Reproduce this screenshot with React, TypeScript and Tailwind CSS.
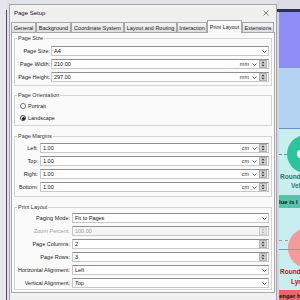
import React from "react";

function Chevron() {
  return (
    <svg width="5" height="3" viewBox="0 0 5 3" className="shrink-0">
      <path d="M0.5 0.5 L2.5 2.5 L4.5 0.5" fill="none" stroke="#555" strokeWidth="0.9" />
    </svg>
  );
}

function Spinner({ disabled }: { disabled?: boolean }) {
  const f = disabled ? "#b8b8b8" : "#333";
  return (
    <svg width="8" height="8" viewBox="0 0 8 8" className="shrink-0">
      <rect x="0.5" y="0.5" width="7" height="7" fill={disabled ? "#e6e6e6" : "#d2d2d2"} stroke={disabled ? "#d0d0d0" : "#b0b0b0"} />
      <path d="M4 1.5 L5.6 3.2 L2.4 3.2Z" fill={f} />
      <path d="M4 6.5 L5.6 4.8 L2.4 4.8Z" fill={f} />
    </svg>
  );
}

type FieldProps = { value: string; unit?: string; spin?: boolean; combo?: boolean; disabled?: boolean };

function Field({ value, unit, spin, combo, disabled }: FieldProps) {
  return (
    <div
      className={`flex-1 h-[10px] flex items-center border border-[#c8c8c8] border-t-[#8f8f8f] ${
        disabled ? "bg-[#f5f5f5] text-[#9a9a9a]" : "bg-white text-[#111]"
      }`}
    >
      <span className="flex-1 pl-[2px] leading-[8px]">{value}</span>
      {unit && <span className="leading-[8px] mr-[3px] text-[#333]">{unit}</span>}
      {unit && (
        <span className="mr-[2px] flex">
          <Chevron />
        </span>
      )}
      {combo && (
        <span className="mr-[1px] flex">
          <Chevron />
        </span>
      )}
      {spin && (
        <span className="mr-[1px] flex">
          <Spinner disabled={disabled} />
        </span>
      )}
    </div>
  );
}

function Row({ label, w, gap, disabled, ...rest }: FieldProps & { label: string; w: string; gap: string }) {
  return (
    <div className={`flex items-center h-[10px] ${gap}`}>
      <span className={`${w} text-right leading-[8px] ${disabled ? "text-[#9a9a9a]" : "text-[#1a1a1a]"}`}>{label}</span>
      <Field disabled={disabled} {...rest} />
    </div>
  );
}

function Group({ title, className, children }: { title: string; className: string; children: React.ReactNode }) {
  return (
    <fieldset className={`border border-[#d4d4d4] pl-0 pr-[2px] ${className}`}>
      <legend className="ml-[2px] px-[1px] leading-[8px] text-[#333]">{title}</legend>
      {children}
    </fieldset>
  );
}

const tabs: [string, string][] = [
  ["General", "w-[25px]"],
  ["Background", "w-[35px]"],
  ["Coordinate System", "w-[53px]"],
  ["Layout and Routing", "w-[53px]"],
  ["Interaction", "w-[30px]"],
  ["Print Layout", "w-[35px]"],
  ["Extensions", "w-[32px]"],
];

export default function App() {
  return (
    <div className="w-[300px] h-[300px] overflow-hidden flex bg-[#e3e3ea] font-['Liberation_Sans',Arial,sans-serif] text-[5.5px]">
      {/* left strip */}
      <div className="w-[9px] h-full flex shrink-0">
        <div className="w-[6px] bg-[#e6e6ee]" />
        <div className="w-[1px] mt-[10px] bg-[#5b3f70]" />
        <div className="w-[2px] bg-[#e2e2ea]" />
      </div>

      {/* dialog */}
      <div className="w-[268px] shrink-0 mt-[4px] h-[300px] border border-[#a4a4a4] bg-[#f0f0f0] flex flex-col">
        <div className="h-[15px] flex items-center justify-between pl-[4px] pr-[7px]">
          <span className="text-[6px] leading-[8px] text-[#111]">Page Setup</span>
          <svg width="6" height="6" viewBox="0 0 6 6">
            <path d="M0.5 0.5 L5.5 5.5 M5.5 0.5 L0.5 5.5" stroke="#666" strokeWidth="0.8" />
          </svg>
        </div>
        <div className="h-[12px] flex items-end px-[1px]">
          {tabs.map(([t, w]) => {
            const sel = t === "Print Layout";
            return (
              <div
                key={t}
                className={`${w} shrink-0 flex items-center justify-center border border-b-0 border-[#a8a8a8] leading-[8px] text-[#1a1a1a] whitespace-nowrap ${
                  sel ? "h-[13px] -mb-px relative z-10 bg-[#fafafa]" : "h-[10px] bg-gradient-to-b from-[#f5f5f5] to-[#dedede]"
                }`}
              >
                {t}
              </div>
            );
          })}
        </div>
        <div className="mx-[1px] border border-[#a8a8a8] bg-[#fafafa] px-[2px] pb-[2px] flex flex-col">
          <Group title="Page Size" className="mt-[1px] pb-[3px]">
            <div className="flex flex-col gap-[3px] pt-[4px]">
              <Row label="Page Size:" w="w-[35px]" gap="gap-[1px]" value="A4" combo />
              <Row label="Page Width:" w="w-[35px]" gap="gap-[1px]" value="210.00" unit="mm" spin />
              <Row label="Page Height:" w="w-[35px]" gap="gap-[1px]" value="297.00" unit="mm" spin />
            </div>
          </Group>
          <Group title="Page Orientation" className="mt-[5px] pb-[2px]">
            <div className="flex flex-col gap-[2px] pt-[2px]">
              <div className="h-[10px] flex items-center">
                <span className="ml-[5px] w-[6px] h-[6px] rounded-full border border-[#707070] bg-white" />
                <span className="ml-[2px] leading-[8px] text-[#1a1a1a]">Portrait</span>
              </div>
              <div className="h-[10px] flex items-center">
                <span className="ml-[5px] w-[6px] h-[6px] rounded-full border border-[#404040] bg-white flex items-center justify-center">
                  <span className="w-[3px] h-[3px] rounded-full bg-[#111]" />
                </span>
                <span className="ml-[2px] leading-[8px] text-[#1a1a1a]">Landscape</span>
              </div>
            </div>
          </Group>
          <Group title="Page Margins" className="mt-[6px] pb-[4px]">
            <div className="flex flex-col gap-[3px] pt-[3px]">
              <Row label="Left:" w="w-[23px]" gap="gap-[2px]" value="1.00" unit="cm" spin />
              <Row label="Top:" w="w-[23px]" gap="gap-[2px]" value="1.00" unit="cm" spin />
              <Row label="Right:" w="w-[23px]" gap="gap-[2px]" value="1.00" unit="cm" spin />
              <Row label="Bottom:" w="w-[23px]" gap="gap-[2px]" value="1.00" unit="cm" spin />
            </div>
          </Group>
          <Group title="Print Layout" className="mt-[6px] pb-[1px]">
            <div className="flex flex-col gap-[3px] pt-[2px]">
              <Row label="Paging Mode:" w="w-[55px]" gap="gap-[2px]" value="Fit to Pages" combo />
              <Row label="Zoom Percent:" w="w-[55px]" gap="gap-[2px]" value="100.00" spin disabled />
              <Row label="Page Columns:" w="w-[55px]" gap="gap-[2px]" value="2" spin />
              <Row label="Page Rows:" w="w-[55px]" gap="gap-[2px]" value="3" spin />
              <Row label="Horizontal Alignment:" w="w-[55px]" gap="gap-[2px]" value="Left" combo />
              <Row label="Vertical Alignment:" w="w-[55px]" gap="gap-[2px]" value="Top" combo />
            </div>
          </Group>
        </div>
        <div className="flex-1" />
      </div>

      {/* right background window */}
      <div className="flex-1 h-full flex flex-col">
        <div className="h-[9px] bg-[#dcdce6] shrink-0" />
        <div className="h-[3px] bg-[#2e2e5c] shrink-0" />
        <div className="flex-1 flex">
          <div className="w-[2px] bg-[#d6d6de]" />
          <div className="flex-1 flex flex-col">
            <div className="h-[56px] bg-[#8e8ef6] shrink-0" />
            <div className="h-[60px] bg-[#b4d3f3] shrink-0" />
            <div className="h-[1px] bg-[#6f8cc4] shrink-0" />
            <div className="flex-1 relative overflow-hidden bg-[#c8eef0] font-['Liberation_Sans',Arial,sans-serif] font-bold">
              <div className="absolute left-0 top-[25px] w-[8px] border-t border-dashed border-[#3aa890]" />
              <div className="absolute left-[8px] top-[6px] w-[38px] h-[38px] rounded-full bg-[#2cc49a]" />
              <div className="absolute left-[18px] top-[21px] w-[12px] h-[8px] rounded-full bg-white" />
              <div className="absolute left-[1px] top-[44px] text-[6.5px] leading-[8px] text-[#17806e] whitespace-nowrap">Rounded</div>
              <div className="absolute left-[12px] top-[53px] text-[6.5px] leading-[8px] text-[#17806e] whitespace-nowrap">Velocity</div>
              <div className="absolute left-0 right-0 top-[66px] h-[13px] bg-[#55c4aa] flex items-center">
                <span className="text-[6px] leading-[8px] text-[#102020] whitespace-nowrap">lue is l</span>
              </div>
              <div className="absolute left-0 top-[111px] w-[9px] border-t border-dashed border-[#a0a0a0]" />
              <div className="absolute left-[9px] top-[99px] w-[40px] h-[40px] rounded-full bg-[#f49a9a]" />
              <div className="absolute left-0 right-0 top-[120px] h-[1px] bg-[#7d98cc]" />
              <div className="absolute left-[1px] top-[139px] text-[6.5px] leading-[8px] text-[#c0141e] whitespace-nowrap">Rounded</div>
              <div className="absolute left-[12px] top-[149px] text-[6.5px] leading-[8px] text-[#c0141e] whitespace-nowrap">Lynx</div>
              <div className="absolute left-0 right-0 top-[161px] h-[12px] bg-[#e86666] flex items-center">
                <span className="text-[6px] leading-[8px] text-[#201010] whitespace-nowrap">enger h</span>
              </div>
            </div>
          </div>
        </div>
      </div>
    </div>
  );
}
